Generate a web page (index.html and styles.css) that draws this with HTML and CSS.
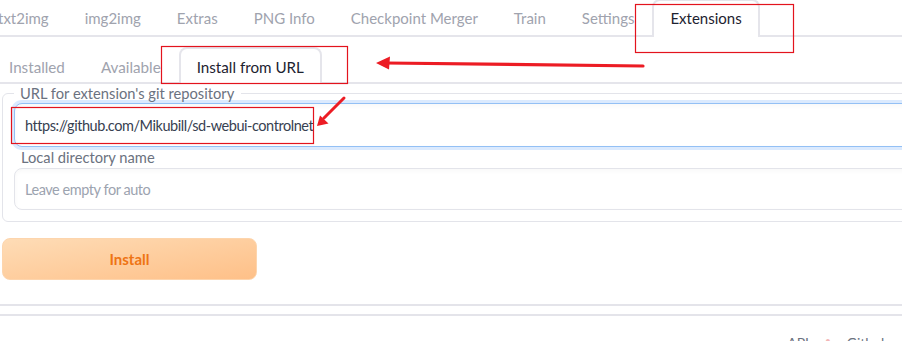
FILE: index.html
```html
<!DOCTYPE html>
<html lang="en">
<head>
    <meta charset="UTF-8">
    <title>Extensions</title>
    <link rel="stylesheet" href="styles.css">
</head>
<body>
<div class="page">
    <div class="top-tabs">
        <button class="tab">txt2img</button>
        <button class="tab">img2img</button>
        <button class="tab">Extras</button>
        <button class="tab">PNG Info</button>
        <button class="tab">Checkpoint Merger</button>
        <button class="tab">Train</button>
        <button class="tab">Settings</button>
        <button class="tab active">Extensions</button>
    </div>

    <div class="sub-tabs">
        <button class="tab">Installed</button>
        <button class="tab">Available</button>
        <button class="tab active">Install from URL</button>
    </div>

    <fieldset class="panel">
        <legend>URL for extension's git repository</legend>
        <input class="field focused" type="text" value="https://github.com/Mikubill/sd-webui-controlnet">
        <label class="field-label">Local directory name</label>
        <input class="field" type="text" placeholder="Leave empty for auto">
    </fieldset>

    <button class="install">Install</button>

    <div class="rule"></div>
    <div class="footer">
        <a href="#">API</a>
        <span class="dot">•</span>
        <a href="#">Github</a>
    </div>
</div>

<!-- annotations drawn over the screenshot -->
<svg class="notes" width="902" height="341" viewBox="0 0 902 341">
    <rect x="635.5" y="4.5" width="158" height="48" fill="none" stroke="#e3131d" stroke-width="1.2"/>
    <rect x="161.5" y="46.5" width="186" height="37" fill="none" stroke="#e3131d" stroke-width="1.2"/>
    <rect x="11.5" y="107.5" width="302" height="36" fill="none" stroke="#e3131d" stroke-width="1.2"/>
    <line x1="643" y1="66" x2="386" y2="63" stroke="#ec1c24" stroke-width="3.2" stroke-linecap="round"/>
    <polygon points="376,63 390,56.5 389,69.5" fill="#ec1c24"/>
    <line x1="344" y1="98" x2="324" y2="118" stroke="#ec1c24" stroke-width="3" stroke-linecap="round"/>
    <polygon points="317,126 320,115.5 328.5,123.5" fill="#ec1c24"/>
</svg>
</body>
</html>
```

FILE: styles.css
```css
body{
    margin: 0;
    overflow: hidden;
    background: #fff;
    font-family: Lato, "Noto Sans", sans-serif;
}
.page{
    width: 1676px;
}
.top-tabs{
    display: flex;
    height: 36px;
    margin: -1px 0 0 -20px;
    border-bottom: 2px solid #e5e5eb;
}
.sub-tabs{
    display: flex;
    height: 35px;
    margin: 10px 0 0 -9px;
    border-bottom: 2px solid #e5e5eb;
}
.tab{
    height: 38px;
    margin-bottom: -2px;
    padding: 0 16px 2px;
    font-family: inherit;
    font-size: 15px;
    color: #a0a3ae;
    background: none;
    border: 2px solid transparent;
    border-bottom: none;
    border-radius: 8px 8px 0 0;
}
.sub-tabs .tab{
    height: 37px;
    padding: 0 16px;
    font-size: 15.2px;
}
.tab.active{
    color: #1d2230;
    background: #fff;
    border-color: #e5e5eb;
}
.panel{
    margin: 0 0 0 2px;
    padding: 0 11px 11px;
    border: 1px solid #e3e4ea;
    border-radius: 6px;
}
.panel legend{
    padding: 0 7px 0 6px;
    line-height: 18px;
    font-size: 14.7px;
    color: #6b7280;
}
.field{
    display: block;
    box-sizing: border-box;
    width: 100%;
    height: 44px;
    padding: 0 10px;
    font-family: inherit;
    font-size: 14.5px;
    letter-spacing: -0.45px;
    color: #374151;
    border: 1px solid #e3e4ea;
    border-radius: 8px;
    box-shadow: inset 0 2px 4px rgba(0, 0, 0, 0.03);
    outline: none;
}
.field::placeholder{
    color: #9ca3af;
}
.field.focused{
    margin-top: 1px;
    border-color: #93c0f5;
    box-shadow: 0 0 0 3px #dbeafe, inset 0 2px 4px rgba(0, 0, 0, 0.03);
}
.field-label{
    display: block;
    padding-left: 7px;
    line-height: 18px;
    margin-top: 1px;
    font-size: 14.7px;
    color: #6b7280;
}
.field-label + .field{
    height: 42px;
    margin-top: 2px;
}
.install{
    display: block;
    width: 255px;
    height: 42px;
    margin: 16px 0 0 2px;
    font-family: inherit;
    font-size: 15px;
    font-weight: 700;
    color: #ee7414;
    background: linear-gradient(to bottom right, #fedcb6, #fec088);
    border: 1px solid #fdd5ad;
    border-radius: 8px;
}
.rule{
    height: 8px;
    margin-top: 24px;
    border-top: 2px solid #e4e4ea;
    border-bottom: 2px solid #e4e4ea;
}
.footer{
    display: flex;
    justify-content: center;
    gap: 16px;
    padding-top: 18px;
    font-size: 14px;
    color: #6b7280;
}
.footer a{
    color: #6b7280;
    text-decoration: none;
}
.footer .dot{
    color: #f3b6b6;
    font-size: 10px;
}
.notes{
    position: absolute;
    top: 0;
    left: 0;
    pointer-events: none;
}
```
